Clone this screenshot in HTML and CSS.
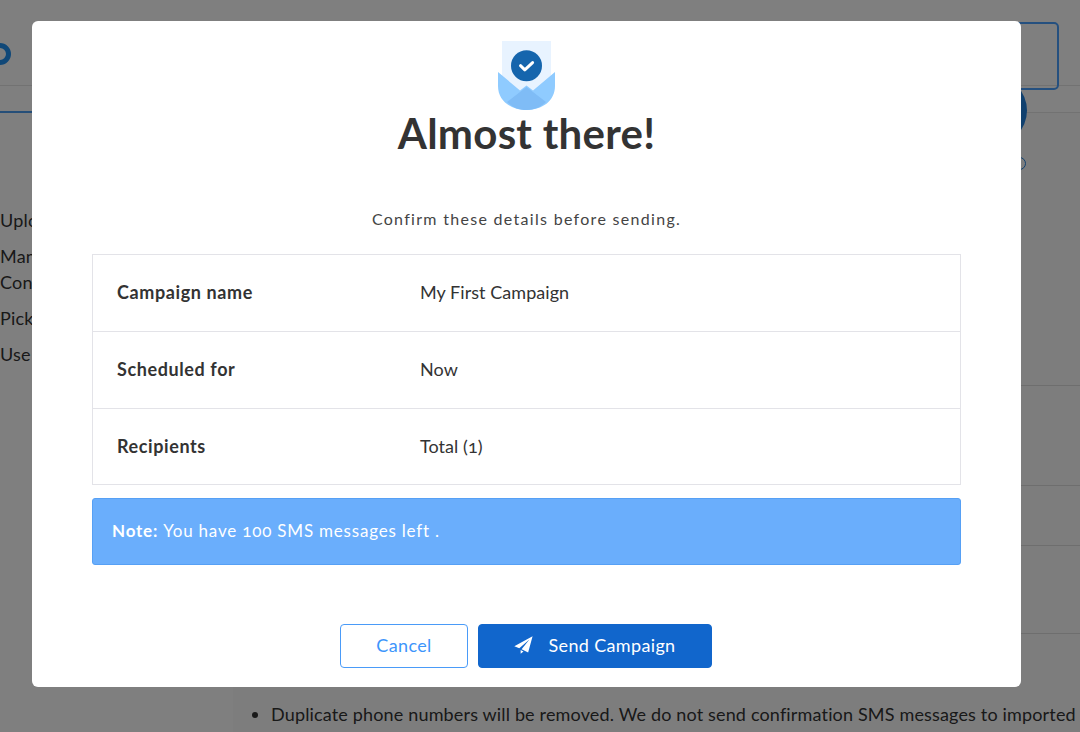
FILE: index.html
```html
<!DOCTYPE html>
<html lang="en">
<head>
<meta charset="utf-8">
<title>Almost there!</title>
<link rel="stylesheet" href="styles.css">
</head>
<body>
<div class="page">
  <header class="top">
    <div class="logo-ring"></div>
    <div class="top-btn"></div>
  </header>
  <div class="tabs">
    <div class="tab-active"></div>
    <div class="step-circle"></div>
    <div class="step-ring"></div>
  </div>
  <div class="columns">
    <aside class="side">
      <p class="side-item">Upload</p>
      <p class="side-item">Manage<br>Contacts</p>
      <p class="side-item">Pick</p>
      <p class="side-item">Use</p>
    </aside>
    <main class="main">
      <div class="row row-a"></div>
      <div class="row row-b"></div>
      <div class="row row-c"></div>
      <div class="row row-d"></div>
      <ul class="notes">
        <li>Duplicate phone numbers will be removed. We do not send confirmation SMS messages to imported</li>
      </ul>
    </main>
  </div>
</div>

<div class="overlay">
  <section class="modal">
    <svg class="hero" viewBox="0 0 57 69" width="57" height="69" aria-hidden="true">
      <rect x="4" y="0" width="49" height="50" fill="#e8f3ff"/>
      <path d="M0 31 V45 C0 60 13 69 28.5 69 C44 69 57 60 57 45 V31 L35 49.5 L28.5 44.5 L22 49.5 Z" fill="#8fcbff"/>
      <path d="M28.5 46 L48 61 C43 66 36 69 28.5 69 C21 69 14 66 9 61 Z" fill="#7fbcf6"/>
      <circle cx="28.5" cy="24.7" r="15.5" fill="#1565ad"/>
      <path d="M22.5 24.7 L26.8 28.8 L34.6 21.6" fill="none" stroke="#fff" stroke-width="3" stroke-linecap="round" stroke-linejoin="round"/>
    </svg>
    <h1 class="title">Almost there!</h1>
    <p class="sub">Confirm these details before sending.</p>
    <div class="details">
      <div class="detail"><span class="detail-label">Campaign name</span><span class="detail-value">My First Campaign</span></div>
      <div class="detail"><span class="detail-label">Scheduled for</span><span class="detail-value">Now</span></div>
      <div class="detail"><span class="detail-label">Recipients</span><span class="detail-value">Total (1)</span></div>
    </div>
    <div class="note"><strong>Note:</strong> You have 100 SMS messages left .</div>
    <div class="actions">
      <button class="btn btn-cancel" type="button">Cancel</button>
      <button class="btn btn-send" type="button">
        <svg class="plane" viewBox="0 0 18 17" width="19" height="18" aria-hidden="true">
          <path d="M17.6 0.2 L0.3 9.6 L5 11.6 L14.6 3.4 L7.2 12.5 L13.4 15.6 Z M6.3 13.3 L6.3 16.8 L9 14.6 Z" fill="#fff"/>
        </svg>
        <span>Send Campaign</span>
      </button>
    </div>
  </section>
</div>
</body>
</html>
```
FILE: styles.css
```css
* { box-sizing: border-box; }
html, body { margin: 0; height: 732px; overflow: hidden; }
body { font-family: "Lato", "Open Sans", sans-serif; color: #333; background: #fff; }

.page { height: 732px; overflow: hidden; background: #fff; }

.top { height: 86px; display: flex; justify-content: space-between; align-items: flex-start; border-bottom: 1px solid #e4e4e4; }
.logo-ring { width: 22px; height: 22px; margin: 43px 0 0 -11px; border: 5px solid #2090f0; border-radius: 50%; }
.top-btn { width: 120px; height: 68px; margin: 22px 21px 0 0; border: 2px solid #4aa0ff; border-radius: 5px; }

.tabs { position: relative; height: 27px; border-bottom: 1px solid #e4e4e4; }
.tab-active { position: absolute; left: 0; bottom: -1px; width: 100px; height: 2px; background: #4a9cf0; }
.step-circle { position: absolute; left: 956px; top: -11px; width: 71px; height: 71px; border-radius: 50%; background: #2080dc; }
.step-ring { position: absolute; left: 1013px; top: 71px; width: 13px; height: 13px; border: 1.5px solid #2080dc; border-radius: 50%; }

.columns { display: flex; height: 619px; }
.side { width: 233px; padding-top: 94px; font-size: 18px; line-height: 26px; letter-spacing: 0.2px; }
.side-item { margin: 0 0 10px; color: #333; }
.main { flex: 1; background: #fbfbfb; }
.row { border-bottom: 1px solid #dcdcdc; }
.row-a { height: 273px; }
.row-b { height: 100px; }
.row-c { height: 60px; }
.row-d { height: 88px; }
.notes { margin: 67px 0 0; padding-left: 38px; font-size: 18px; line-height: 26px; letter-spacing: 0.16px; white-space: nowrap; color: #333; }

.overlay { position: fixed; inset: 0; background: rgba(0, 0, 0, 0.5); display: flex; align-items: flex-start; padding: 21px 59px 0 32px; }
.modal { width: 989px; height: 666px; background: #fff; border-radius: 6px; display: flex; flex-direction: column; align-items: center; padding: 20px 60px 0; }

.hero { display: block; flex: none; }
.title { margin: 0; font-size: 42px; line-height: 46px; font-weight: 700; letter-spacing: 0.25px; color: #333; }
.sub { margin: 51px 0 0; font-size: 16px; line-height: 24px; letter-spacing: 1.3px; color: #444; }

.details { width: 100%; margin-top: 23px; border: 1px solid #e3e3e8; font-variant-numeric: oldstyle-nums; }
.detail { display: flex; align-items: center; height: 77px; padding: 0 0 2px 24px; font-size: 18px; color: #333; border-bottom: 1px solid #e3e3e8; }
.detail:last-child { border-bottom: 0; height: 75px; }
.detail-label { width: 303px; font-weight: 700; letter-spacing: 0.6px; }
.detail-value { letter-spacing: 0.05px; }

.note { width: 100%; height: 67px; margin-top: 13px; display: flex; align-items: center; gap: 5px; padding: 0 19px 2px; background: #6aaefc; border: 1px solid #56a0f5; border-radius: 3px; color: #fff; font-size: 17px; letter-spacing: 0.8px; font-variant-numeric: oldstyle-nums; }

.actions { display: flex; gap: 10px; margin-top: 59px; margin-right: 1px; }
.btn { height: 44px; padding: 0 0 2px; border-radius: 4px; font-family: inherit; font-size: 18px; letter-spacing: 0.35px; display: flex; align-items: center; justify-content: center; }
.btn-cancel { width: 128px; background: #fff; border: 1.5px solid #4a9bf8; color: #3d95fb; }
.btn-send { width: 234px; gap: 15px; background: #1166cc; border: 1px solid #1166cc; color: #fff; }
.plane { display: block; flex: none; }
```
